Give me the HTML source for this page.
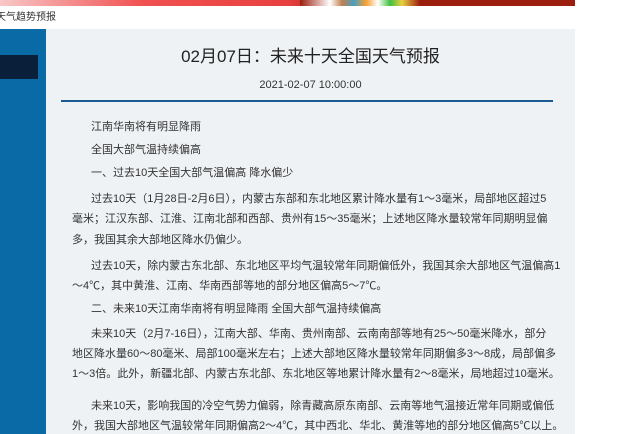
<!DOCTYPE html>
<html><head><meta charset="utf-8"><style>
body{margin:0;width:640px;height:434px;overflow:hidden;background:#fff;position:relative;font-family:"Liberation Sans","Noto Sans CJK SC",sans-serif;color:#333}
.a{position:absolute;white-space:nowrap;font-size:11px;line-height:16px}
</style></head><body>
<div style="position:absolute;left:0;top:0;width:575px;height:6px;background:linear-gradient(90deg,#f8c8c8,#f05050 25%,#e84040 50%,#9c1e0e 60%,#9c1e0e)"></div>
<div style="position:absolute;left:300px;top:0;width:120px;height:6px;background:linear-gradient(90deg,#9c1e0e,#fff 25%,#c08050 35%,#4aa0c0 45%,#f8a030 55%,#fff 65%,#40c040 75%,#e8d040 85%,#9c1e0e)"></div>
<div class="a" style="left:-4px;top:10px;font-size:10px;color:#333">天气趋势预报</div>
<div style="position:absolute;left:0;top:29px;width:46px;height:405px;background:#0a6aa6"></div>
<div style="position:absolute;left:0;top:55px;width:38px;height:24px;background:#0a1f3a"></div>
<div style="position:absolute;left:46px;top:29px;width:529px;height:405px;background:#eef2f5"></div>
<div class="a" style="left:46px;width:529px;text-align:center;top:46px;font-size:17px;line-height:22px;color:#222">02月07日：未来十天全国天气预报</div>
<div class="a" style="left:46px;width:529px;text-align:center;top:77px;font-size:11px;color:#333">2021-02-07 10:00:00</div>
<div style="position:absolute;left:61px;top:100px;width:492px;height:2px;background:#1a5b94"></div>
<div class="a" style="left:91px;top:119px">江南华南将有明显降雨</div>
<div class="a" style="left:91px;top:142px">全国大部气温持续偏高</div>
<div class="a" style="left:91px;top:165px">一、过去10天全国大部气温偏高 降水偏少</div>
<div class="a" style="left:91px;top:191px">过去10天（1月28日-2月6日），内蒙古东部和东北地区累计降水量有1～3毫米，局部地区超过5</div>
<div class="a" style="left:72px;top:211px">毫米；江汉东部、江淮、江南北部和西部、贵州有15～35毫米；上述地区降水量较常年同期明显偏</div>
<div class="a" style="left:72px;top:232px">多，我国其余大部地区降水仍偏少。</div>
<div class="a" style="left:91px;top:258px">过去10天，除内蒙古东北部、东北地区平均气温较常年同期偏低外，我国其余大部地区气温偏高1</div>
<div class="a" style="left:72px;top:278px">～4℃，其中黄淮、江南、华南西部等地的部分地区偏高5～7℃。</div>
<div class="a" style="left:91px;top:301px">二、未来10天江南华南将有明显降雨 全国大部气温持续偏高</div>
<div class="a" style="left:91px;top:326px">未来10天（2月7-16日），江南大部、华南、贵州南部、云南南部等地有25～50毫米降水，部分</div>
<div class="a" style="left:72px;top:346px">地区降水量60～80毫米、局部100毫米左右；上述大部地区降水量较常年同期偏多3～8成，局部偏多</div>
<div class="a" style="left:72px;top:366px">1～3倍。此外，新疆北部、内蒙古东北部、东北地区等地累计降水量有2～8毫米，局地超过10毫米。</div>
<div class="a" style="left:91px;top:398px">未来10天，影响我国的冷空气势力偏弱，除青藏高原东南部、云南等地气温接近常年同期或偏低</div>
<div class="a" style="left:72px;top:418px">外，我国大部地区气温较常年同期偏高2～4℃，其中西北、华北、黄淮等地的部分地区偏高5℃以上。</div>
</body></html>
